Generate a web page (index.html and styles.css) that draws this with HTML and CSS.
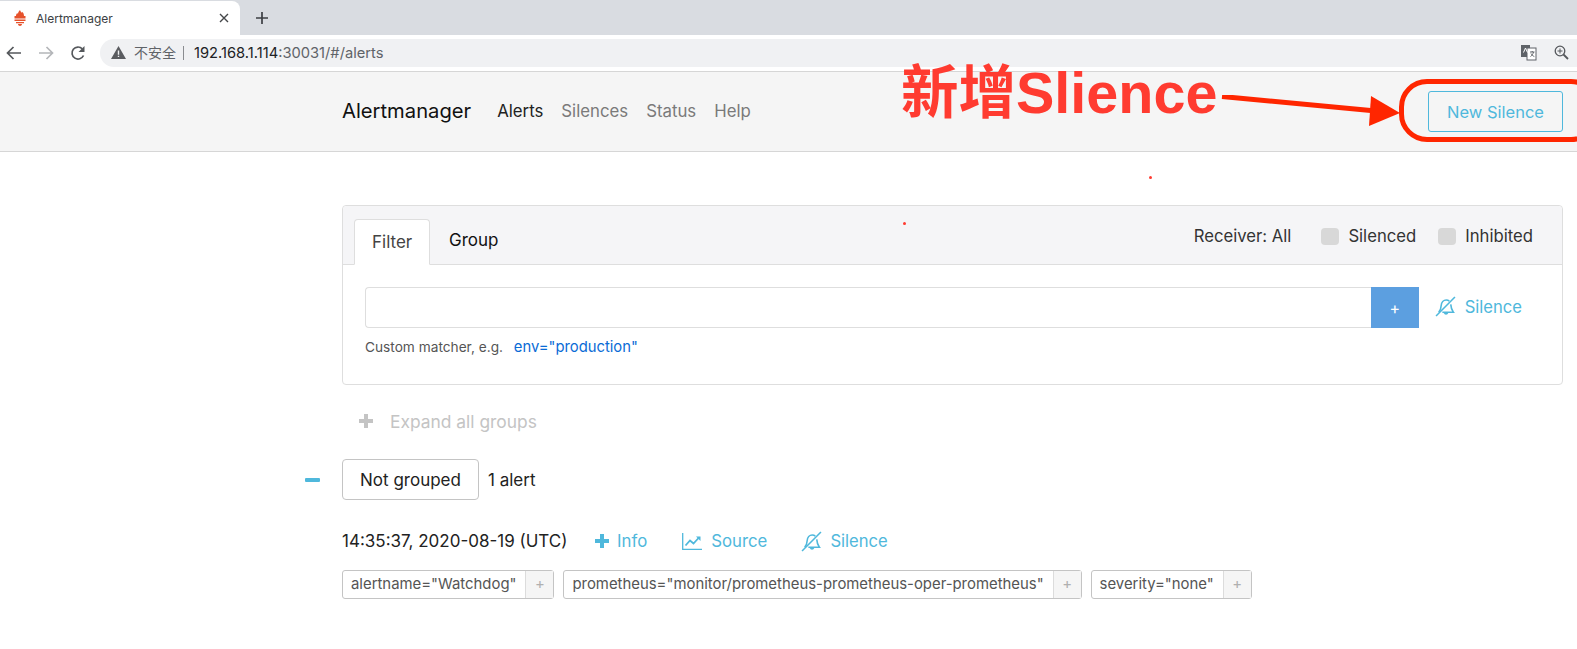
FILE: index.html
```html
<!DOCTYPE html>
<html lang="zh">
<head>
    <meta charset="UTF-8">
    <title>Alertmanager</title>
    <link rel="stylesheet" href="styles.css">
</head>
<body>
    <!-- browser chrome -->
    <div class="tabstrip">
        <div class="tab">
            <svg class="favicon" width="14" height="16" viewBox="0 0 14 16">
                <path fill="#e6522c" d="M7 0c.4 1.600 1.300 2 2 3 .2-.5.3-.9.3-1.300 1 1 1.700 2.500 1.700 4.300h1.500v2.500h-11V6H3c0-1.400.6-2.200 1.300-3 .2.500.4.800.7 1C5 2.500 5.700 1.200 7 0zM1.500 9.500h11V11h-11zM3 12h8v1.300H3zM5 14h4c0 1-1 2-2 2s-2-1-2-2z"/>
            </svg>
            <span class="tab-title">Alertmanager</span>
            <svg class="tab-close" width="10" height="10" viewBox="0 0 10 10">
                <path d="M1 1l8 8M9 1l-8 8" stroke="#45474a" stroke-width="1.400" fill="none"/>
            </svg>
        </div>
        <svg class="new-tab" width="12" height="12" viewBox="0 0 12 12">
            <path d="M6 0v12M0 6h12" stroke="#3c3f43" stroke-width="1.700" fill="none"/>
        </svg>
    </div>
    <div class="toolbar">
        <svg class="tool-btn" width="16" height="14" viewBox="0 0 16 14">
            <path d="M15 7H2M7.500 1L1.500 7l6 6" stroke="#55585c" stroke-width="1.700" fill="none"/>
        </svg>
        <svg class="tool-btn" width="16" height="14" viewBox="0 0 16 14">
            <path d="M1 7h13M8.500 1l6 6-6 6" stroke="#b4b6b9" stroke-width="1.700" fill="none"/>
        </svg>
        <svg class="tool-btn" width="16" height="16" viewBox="0 0 16 16">
            <path d="M13.500 10.500A6 6 0 1 1 12.300 3.800" stroke="#55585c" stroke-width="1.700" fill="none"/>
            <path d="M14.500 1v6h-6z" fill="#55585c"/>
        </svg>
        <div class="omnibox">
            <svg class="warn" width="15" height="13" viewBox="0 0 15 13">
                <path fill="#5a5c60" d="M7.500 0L15 13H0zM6.800 4.500v4.200h1.400V4.500zm0 5.200v1.400h1.400V9.700z" fill-rule="evenodd"/>
            </svg>
            <span class="insecure">不安全</span>
            <span class="url"><b>192.168.1.114</b>:30031/#/alerts</span>
            <svg class="omni-icon translate" width="16" height="17" viewBox="0 0 16 17">
                <rect x="0" y="1" width="9" height="12" fill="#5f6368"/>
                <rect x="6" y="4" width="9" height="12" fill="#fff" stroke="#5f6368"/>
                <path d="M2.500 8.500l2-4.500 2 4.500" stroke="#fff" fill="none"/>
                <path d="M9 8h4.500M11.200 7v1M12.500 8c-.5 2-1.500 3.500-3 4.500M10 9.500c.7 1.500 2 2.500 3.300 3" stroke="#5f6368" fill="none"/>
            </svg>
            <svg class="omni-icon" width="15" height="15" viewBox="0 0 15 15">
                <circle cx="6" cy="6" r="4.800" stroke="#55585c" stroke-width="1.300" fill="none"/>
                <path d="M9.500 9.500l4.500 4.500" stroke="#55585c" stroke-width="1.800"/>
                <path d="M6 3.500v5M3.500 6h5" stroke="#55585c"/>
            </svg>
        </div>
    </div>

    <!-- alertmanager page -->
    <nav class="navbar">
        <span class="brand">Alertmanager</span>
        <a class="nav-link active">Alerts</a>
        <a class="nav-link">Silences</a>
        <a class="nav-link">Status</a>
        <a class="nav-link">Help</a>
        <button class="btn-new">New Silence</button>
    </nav>

    <main class="content">
        <section class="card">
            <div class="card-head">
                <div class="tab-item selected">Filter</div>
                <div class="tab-item">Group</div>
                <div class="head-right">
                    <span class="receiver">Receiver: All</span>
                    <label class="check"><i class="box"></i>Silenced</label>
                    <label class="check"><i class="box"></i>Inhibited</label>
                </div>
            </div>
            <div class="card-body">
                <div class="filter-row">
                    <input class="filter-input" type="text">
                    <button class="filter-add">+</button>
                    <a class="link silence-link">
                        <svg class="bell" width="21" height="21" viewBox="0 0 20 20"><use href="#bell-slash"/></svg>
                        Silence
                    </a>
                </div>
                <p class="help">Custom matcher, e.g. <a class="example">env="production"</a></p>
            </div>
        </section>

        <div class="expand">
            <svg width="14" height="14" viewBox="0 0 14 14"><path d="M7 0v14M0 7h14" stroke="#c4c4c4" stroke-width="4"/></svg>
            <span>Expand all groups</span>
        </div>

        <div class="group-row">
            <i class="minus"></i>
            <span class="group-btn">Not grouped</span>
            <span class="count">1 alert</span>
        </div>

        <div class="alert-row">
            <span class="time">14:35:37, 2020-08-19 (UTC)</span>
            <a class="link info">
                <svg width="14" height="14" viewBox="0 0 14 14"><path d="M7 0v14M0 7h14" stroke="#4fb8dc" stroke-width="4"/></svg>
                Info
            </a>
            <a class="link source">
                <svg width="20" height="17" viewBox="0 0 20 17">
                    <path d="M.7 0v16.300H20" stroke="#4fb8dc" stroke-width="1.300" fill="none"/>
                    <path d="M3.500 12.500l4.500-5 3.500 3L17 4.500" stroke="#4fb8dc" stroke-width="1.800" fill="none"/>
                    <path d="M14 3.500h4.500V8z" fill="#4fb8dc"/>
                </svg>
                Source
            </a>
            <a class="link silence-alert">
                <svg class="bell" width="21" height="21" viewBox="0 0 20 20"><use href="#bell-slash"/></svg>
                Silence
            </a>
        </div>

        <div class="labels">
            <span class="label"><span class="label-text">alertname="Watchdog"</span><span class="label-add">+</span></span>
            <span class="label"><span class="label-text">prometheus="monitor/prometheus-prometheus-oper-prometheus"</span><span class="label-add">+</span></span>
            <span class="label"><span class="label-text">severity="none"</span><span class="label-add">+</span></span>
        </div>
    </main>

    <!-- red annotation drawn on top of the screenshot -->
    <div class="note-text">新增Slience</div>
    <svg class="note-arrow" width="180" height="32" viewBox="0 0 180 32">
        <path d="M1 1.500L155 16" stroke="#ff2600" stroke-width="5" fill="none"/>
        <path d="M150 1l29 17-31 13z" fill="#ff2600"/>
    </svg>
    <div class="note-ring"></div>
    <i class="speck speck-a"></i>
    <i class="speck speck-b"></i>

    <svg class="defs" width="0" height="0">
        <symbol id="bell-slash" viewBox="0 0 20 20">
            <path d="M1 19L19 1" stroke="#4fb8dc" stroke-width="1.500" fill="none"/>
            <path d="M3.500 15.500c1.500-1.500 2.200-3 2.400-6.500.2-3 2.200-5.200 4.800-5.200 1.200 0 2.300.5 3 1.200M15 8c.2 3 1 5.500 2.500 7.500H7" stroke="#4fb8dc" stroke-width="1.500" fill="none"/>
            <path d="M8.300 16.300a2.400 2.400 0 0 0 4.400 0z" fill="#4fb8dc"/>
        </symbol>
    </svg>
</body>
</html>
```

FILE: styles.css
```css
* {
    box-sizing: border-box;
}
body {
    margin: 0;
    height: 649px;
    overflow: hidden;
    position: relative;
    background: white;
    font-family: 'Inter', 'Noto Sans CJK SC', sans-serif;
    font-size: 17px;
    color: #212529;
}

/* browser chrome */
.tabstrip {
    height: 35px;
    background: #d9dce1;
    display: flex;
    align-items: flex-end;
}
.tab {
    width: 240px;
    height: 34px;
    background: white;
    border-radius: 0 8px 0 0;
    display: flex;
    align-items: center;
    padding-left: 13px;
    font-size: 12px;
    color: #3c4043;
}
.tab-title {
    margin-left: 9px;
    flex: 1;
}
.tab-close {
    margin-right: 11px;
}
.new-tab {
    margin: 0 0 11px 16px;
}
.toolbar {
    height: 37px;
    background: white;
    border-bottom: 1px solid #d6d6d6;
    display: flex;
    align-items: center;
    padding: 0 0 1px 6px;
}
.tool-btn {
    margin-right: 16px;
}
.omnibox {
    flex: 1;
    height: 28px;
    margin-left: -2px;
    background: #f0f1f3;
    border-radius: 14px 0 0 14px;
    display: flex;
    align-items: center;
    padding-left: 11px;
    color: #5f6368;
}
.insecure {
    margin-left: 8px;
    padding-right: 7px;
    border-right: 1px solid #8a8c90;
    line-height: 14px;
    font-size: 14px;
}
.url {
    margin-left: 10px;
    flex: 1;
    font-size: 14.7px;
}
.url b {
    font-weight: 400;
    color: #202124;
}
.omni-icon {
    margin-right: 8px;
}
.translate {
    margin-right: 17px;
}

/* navbar */
.navbar {
    height: 80px;
    background: #f5f5f5;
    border-bottom: 1px solid #d6d6d6;
    display: flex;
    align-items: center;
    padding: 0 14px 2px 342px;
    font-size: 16.8px;
}
.brand {
    font-size: 20.2px;
    color: #111;
    margin-right: 26px;
}
.nav-link {
    color: #7a7a7a;
    margin-right: 18px;
}
.nav-link.active {
    color: #222;
}
.btn-new {
    margin-left: auto;
    margin-bottom: -2px;
    width: 135px;
    height: 41px;
    background: transparent;
    border: 1px solid #4fb8dc;
    border-radius: 3px;
    color: #4fb8dc;
    font: inherit;
    font-size: 16.5px;
}

/* content */
.content {
    padding: 53px 14px 0 342px;
}
.card {
    height: 180px;
    border: 1px solid #dedede;
    border-radius: 4px;
}
.card-head {
    height: 59px;
    background: #f5f5f7;
    border-bottom: 1px solid #dedede;
    border-radius: 4px 4px 0 0;
    display: flex;
    align-items: flex-end;
    padding-left: 11px;
}
.tab-item {
    height: 46px;
    padding: 12px 19px 0;
    color: #111;
}
.tab-item.selected {
    width: 76px;
    margin-bottom: -1px;
    height: 46px;
    background: white;
    border: 1px solid #dedede;
    border-bottom-color: white;
    border-radius: 4px 4px 0 0;
    color: #444;
    padding: 12px 17px 0;
}
.head-right {
    margin-left: auto;
    align-self: center;
    display: flex;
    align-items: center;
    padding: 2px 29px 0 0;
    font-size: 16.7px;
    color: #333;
}
.receiver {
    margin-right: 8px;
}
.check {
    display: flex;
    align-items: center;
    margin-left: 22px;
}
.box {
    width: 18px;
    height: 17px;
    background: #d8d8d8;
    border-radius: 4px;
    margin-right: 9px;
}
.card-body {
    padding: 22px 22px 0;
}
.filter-row {
    display: flex;
    align-items: center;
}
.filter-input {
    flex: 1;
    height: 41px;
    border: 1px solid #dedede;
    border-right: none;
    border-radius: 4px 0 0 4px;
    background: white;
}
.filter-add {
    width: 48px;
    height: 41px;
    border: none;
    background: #5c9fe0;
    color: white;
    font-size: 16px;
    font-family: inherit;
}
.link {
    color: #4fb8dc;
    display: inline-flex;
    align-items: center;
}
.silence-link {
    margin: -2px 18px 0 16px;
    gap: 9px;
    font-size: 16.6px;
}
.help {
    margin: 10px 0 0;
    font-size: 13.7px;
    color: #555;
}
.example {
    margin-left: 7px;
    font-size: 14.8px;
    color: #0a6bd6;
}
.expand {
    margin: 25px 0 0 17px;
    height: 22px;
    display: flex;
    align-items: center;
    gap: 17px;
    color: #c4c4c4;
    font-size: 17.4px;
}
.group-row {
    margin-top: 27px;
    display: flex;
    align-items: center;
}
.minus {
    width: 15px;
    height: 4px;
    margin-left: -37px;
    margin-right: 22px;
    background: #4fb8dc;
    border-radius: 1px;
}
.group-btn {
    width: 137px;
    height: 41px;
    border: 1px solid #c4c4c4;
    border-radius: 4px;
    display: flex;
    align-items: center;
    justify-content: center;
    color: #222;
}
.count {
    margin-left: 9px;
    color: #222;
}
.alert-row {
    margin-top: 28px;
    height: 26px;
    display: flex;
    align-items: center;
}
.time {
    width: 253px;
    color: #222;
}
.info {
    gap: 8px;
    font-size: 16.8px;
}
.source {
    margin-left: 35px;
    gap: 9px;
    font-size: 16.8px;
}
.silence-alert {
    margin-left: 34px;
    gap: 8px;
    font-size: 16.6px;
}
.labels {
    margin-top: 16px;
    display: flex;
    gap: 9px;
    font-size: 14.9px;
}
.label {
    height: 29px;
    display: flex;
    border: 1px solid #c4c4c4;
    border-radius: 3px;
    color: #555;
}
.label-text {
    padding: 0 9px 0 8px;
    line-height: 27px;
}
.label-add {
    width: 28px;
    border-left: 1px solid #dcdcdc;
    background: #f5f5f5;
    color: #b0b0b0;
    text-align: center;
    line-height: 27px;
}

/* annotation */
.note-text {
    position: absolute;
    left: 901px;
    top: 60px;
    font-family: 'Liberation Sans', 'Noto Sans CJK SC', sans-serif;
    font-weight: 700;
    font-size: 57.5px;
    line-height: 66px;
    color: #ff3b30;
    white-space: nowrap;
}
.note-arrow {
    position: absolute;
    left: 1221px;
    top: 95px;
}
.note-ring {
    position: absolute;
    left: 1399px;
    top: 79px;
    width: 200px;
    height: 63px;
    border: 5px solid #ff2600;
    border-radius: 28px;
}
.speck {
    position: absolute;
    width: 3px;
    height: 3px;
    border-radius: 50%;
    background: #ff3b30;
}
.speck-a {
    left: 1149px;
    top: 176px;
}
.speck-b {
    left: 903px;
    top: 222px;
}
.defs {
    position: absolute;
}
```
